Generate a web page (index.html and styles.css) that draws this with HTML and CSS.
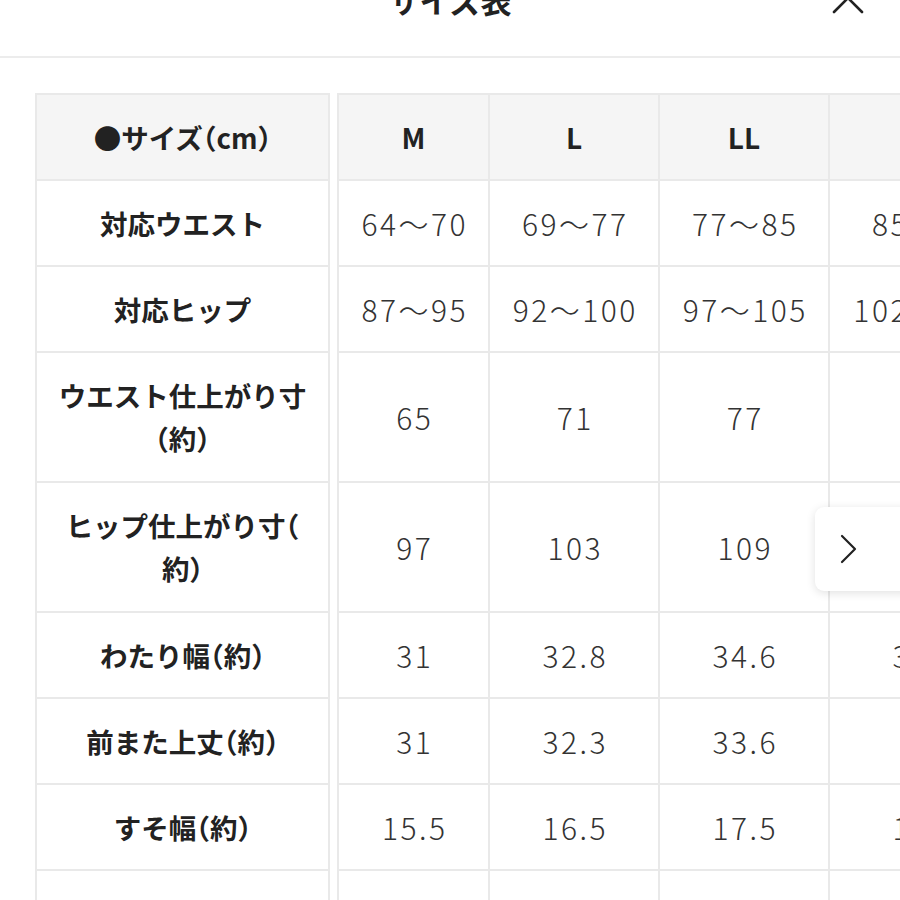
FILE: index.html
```html
<!DOCTYPE html>
<html lang="ja">
<head>
<meta charset="utf-8">
<title>サイズ表</title>
<link rel="stylesheet" href="styles.css">
</head>
<body>
<header class="modal-head">
  <h1 class="title">サイズ表</h1>
  <button class="close" aria-label="閉じる">
    <svg width="36" height="36" viewBox="0 0 36 36"><path d="M4 4 L32 32 M32 4 L4 32" stroke="#222" stroke-width="2.6" fill="none" stroke-linecap="round"/></svg>
  </button>
</header>
<main class="sheet">
  <div class="tables">
    <table class="fixed">
      <tr class="head"><th>●サイズ（cm）</th></tr>
      <tr><th>対応ウエスト</th></tr>
      <tr><th>対応ヒップ</th></tr>
      <tr class="tall"><th>ウエスト仕上がり寸<br>（約）</th></tr>
      <tr class="tall"><th>ヒップ仕上がり寸（<br>約）</th></tr>
      <tr><th>わたり幅（約）</th></tr>
      <tr><th>前また上丈（約）</th></tr>
      <tr><th>すそ幅（約）</th></tr>
      <tr><th>ひざ下幅（約）</th></tr>
    </table>
    <div class="scroll">
      <table class="data">
        <colgroup><col class="c-m"><col class="c-l"><col class="c-l"><col class="c-x"></colgroup>
        <tr class="head"><th>M</th><th>L</th><th>LL</th><th>3L</th></tr>
        <tr><td>64～70</td><td>69～77</td><td>77～85</td><td>85～93</td></tr>
        <tr><td>87～95</td><td>92～100</td><td>97～105</td><td>102～110</td></tr>
        <tr class="tall"><td>65</td><td>71</td><td>77</td><td>83</td></tr>
        <tr class="tall"><td>97</td><td>103</td><td>109</td><td>115</td></tr>
        <tr><td>31</td><td>32.8</td><td>34.6</td><td>36.4</td></tr>
        <tr><td>31</td><td>32.3</td><td>33.6</td><td>35</td></tr>
        <tr><td>15.5</td><td>16.5</td><td>17.5</td><td>18.5</td></tr>
        <tr><td>20</td><td>21</td><td>22</td><td>23</td></tr>
      </table>
    </div>
  </div>
  <button class="next" aria-label="次へ">
    <svg width="20" height="32" viewBox="0 0 20 32"><path d="M3 3 L16 16 L3 29" stroke="#222" stroke-width="2.2" fill="none" stroke-linecap="round" stroke-linejoin="round"/></svg>
  </button>
</main>
</body>
</html>
```
FILE: styles.css
```css
* { box-sizing: border-box; }
html, body { margin: 0; padding: 0; background: #fff; }
body {
  font-family: "Noto Sans CJK JP", "Noto Sans", sans-serif;
  color: #222;
  width: 900px;
  height: 900px;
  overflow: hidden;
}
.modal-head {
  position: relative;
  height: 58px;
  border-bottom: 2px solid #ececec;
  display: flex;
  justify-content: center;
}
.title {
  margin: -20px 0 0 0;
  font-size: 31px;
  line-height: 40px;
  font-weight: 700;
  color: #222;
}
.close {
  position: absolute;
  right: 34px;
  top: -20px;
  border: 0;
  background: none;
  padding: 0;
}
.sheet {
  position: relative;
  padding: 35px 0 0 35px;
}
.tables {
  display: flex;
  gap: 7px;
  align-items: flex-start;
}
table {
  border-collapse: collapse;
}
th, td {
  border: 2px solid #e9e9e9;
  text-align: center;
  vertical-align: middle;
  height: 86px;
  padding: 0;
}
tr.tall th, tr.tall td { height: 130px; }
.fixed { width: 295px; }
.fixed th {
  font-size: 27.5px;
  font-weight: 700;
  line-height: 43px;
  color: #222;
  font-feature-settings: "halt";
}
.head th { background: #f5f5f5; }
.scroll {
  flex: 1;
  overflow: hidden;
}
.data { table-layout: fixed; width: 681px; }
.c-m { width: 151px; }
.c-l { width: 170px; }
.c-x { width: 190px; }
.data th {
  font-size: 28px;
  font-weight: 700;
  color: #222;
}
.data td {
  font-size: 30px;
  font-weight: 300;
  letter-spacing: 2.5px;
  text-indent: 2.5px;
  color: #333;
}
.next {
  position: absolute;
  left: 815px;
  top: 449px;
  width: 100px;
  height: 84px;
  border: 0;
  border-radius: 9px;
  background: #fff;
  box-shadow: 0 2px 10px rgba(0,0,0,0.12);
  padding: 0 0 0 24px;
  display: flex;
  align-items: center;
}
```
